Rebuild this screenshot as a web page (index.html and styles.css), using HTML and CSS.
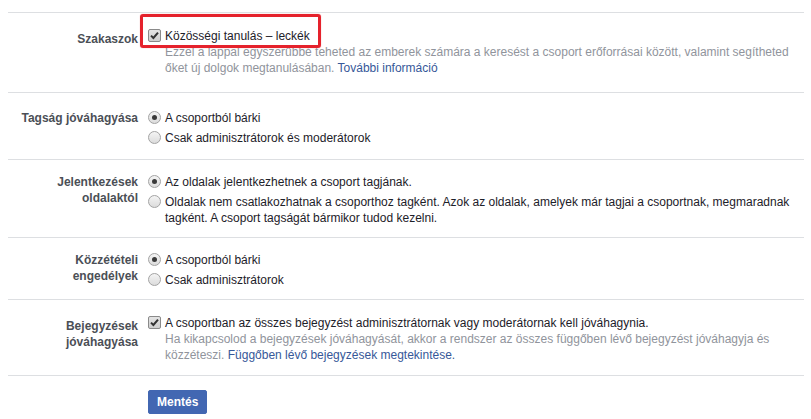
FILE: index.html
```html
<!DOCTYPE html>
<html lang="hu">
<head>
    <meta charset="UTF-8">
    <title>Csoportbeállítások</title>
    <link rel="stylesheet" href="styles.css">
</head>
<body>
    <main class="settings">
        <div class="row row-check">
            <div class="label">Szakaszok</div>
            <div class="field">
                <div class="option">
                    <span class="box checkbox">
                        <svg width="11" height="11" viewBox="0 0 11 11"><path d="M2 5.6 L4.4 8 L9 2.6" fill="none" stroke="#333" stroke-width="2"/></svg>
                    </span>
                    <div class="option-text">
                        <div>Közösségi tanulás – leckék</div>
                        <div class="hint">Ezzel a lappal egyszerűbbé teheted az emberek számára a keresést a csoport erőforrásai között, valamint segítheted őket új dolgok megtanulásában. <a href="#">További információ</a></div>
                    </div>
                </div>
                <div class="highlight"></div>
            </div>
        </div>

        <div class="row row-tall">
            <div class="label">Tagság jóváhagyása</div>
            <div class="field">
                <div class="option">
                    <span class="box radio checked"></span>
                    <div class="option-text">A csoportból bárki</div>
                </div>
                <div class="option">
                    <span class="box radio"></span>
                    <div class="option-text">Csak adminisztrátorok és moderátorok</div>
                </div>
            </div>
        </div>

        <div class="row">
            <div class="label">Jelentkezések oldalaktól</div>
            <div class="field">
                <div class="option">
                    <span class="box radio checked"></span>
                    <div class="option-text">Az oldalak jelentkezhetnek a csoport tagjának.</div>
                </div>
                <div class="option">
                    <span class="box radio"></span>
                    <div class="option-text">Oldalak nem csatlakozhatnak a csoporthoz tagként. Azok az oldalak, amelyek már tagjai a csoportnak, megmaradnak tagként. A csoport tagságát bármikor tudod kezelni.</div>
                </div>
            </div>
        </div>

        <div class="row">
            <div class="label">Közzétételi engedélyek</div>
            <div class="field">
                <div class="option">
                    <span class="box radio checked"></span>
                    <div class="option-text">A csoportból bárki</div>
                </div>
                <div class="option">
                    <span class="box radio"></span>
                    <div class="option-text">Csak adminisztrátorok</div>
                </div>
            </div>
        </div>

        <div class="row row-check">
            <div class="label">Bejegyzések jóváhagyása</div>
            <div class="field">
                <div class="option">
                    <span class="box checkbox">
                        <svg width="11" height="11" viewBox="0 0 11 11"><path d="M2 5.6 L4.4 8 L9 2.6" fill="none" stroke="#333" stroke-width="2"/></svg>
                    </span>
                    <div class="option-text">
                        <div>A csoportban az összes bejegyzést adminisztrátornak vagy moderátornak kell jóváhagynia.</div>
                        <div class="hint">Ha kikapcsolod a bejegyzések jóváhagyását, akkor a rendszer az összes függőben lévő bejegyzést jóváhagyja és közzéteszi. <a href="#">Függőben lévő bejegyzések megtekintése.</a></div>
                    </div>
                </div>
            </div>
        </div>

        <div class="actions">
            <button class="save">Mentés</button>
        </div>
    </main>
</body>
</html>
```

FILE: styles.css
```css
* {
    margin: 0;
    padding: 0;
    box-sizing: border-box;
}
body {
    font-family: 'Liberation Sans', Arial, sans-serif;
    font-size: 12px;
    line-height: 16px;
    color: #1d2129;
    background-color: #fff;
}
.settings {
    width: 796px;
    margin: 12px 0 0 8px;
    border-top: 1px solid #dddfe2;
}
.row {
    display: grid;
    grid-template-columns: 130px 1fr;
    column-gap: 10px;
    padding: 14px 0 11px;
    border-bottom: 1px solid #dddfe2;
}
.row-check {
    padding: 15px 0 12px;
}
.row-tall {
    padding: 17px 0 13px;
}
.label {
    text-align: right;
    font-weight: bold;
    color: #4b4f56;
}
.row-check .label {
    padding-top: 3px;
}
.field {
    position: relative;
}
.option {
    display: flex;
    align-items: flex-start;
    gap: 4px;
    margin-bottom: 4px;
}
.option:last-child {
    margin-bottom: 0;
}
.option-text {
    flex: 1;
}
.hint {
    color: #90949c;
}
.hint a {
    color: #365899;
    text-decoration: none;
}
.box {
    flex: none;
    width: 13px;
    height: 13px;
    margin-top: 1px;
    border: 1px solid #a3a3a3;
    background: linear-gradient(#f4f4f4, #dcdcdc);
    display: flex;
    align-items: center;
    justify-content: center;
}
.checkbox {
    border-radius: 2px;
    border-color: #8a8a8a;
    background: linear-gradient(#e4e4e4, #cfcfcf);
}
.radio {
    border-radius: 50%;
}
.radio.checked::after {
    content: "";
    width: 5px;
    height: 5px;
    border-radius: 50%;
    background-color: #3a3a3a;
}
.highlight {
    position: absolute;
    left: -8px;
    top: -14px;
    width: 181px;
    height: 34px;
    border: 3px solid #e5222c;
    border-radius: 3px;
    box-shadow: 0 0 1px rgba(229,34,44,0.6);
}
.actions {
    padding: 14px 0 0 140px;
}
.save {
    font-family: inherit;
    font-size: 12px;
    font-weight: bold;
    color: #fff;
    background-color: #4267b2;
    border: 1px solid #4267b2;
    border-radius: 2px;
    height: 24px;
    padding: 0 8px;
    cursor: pointer;
}
```
